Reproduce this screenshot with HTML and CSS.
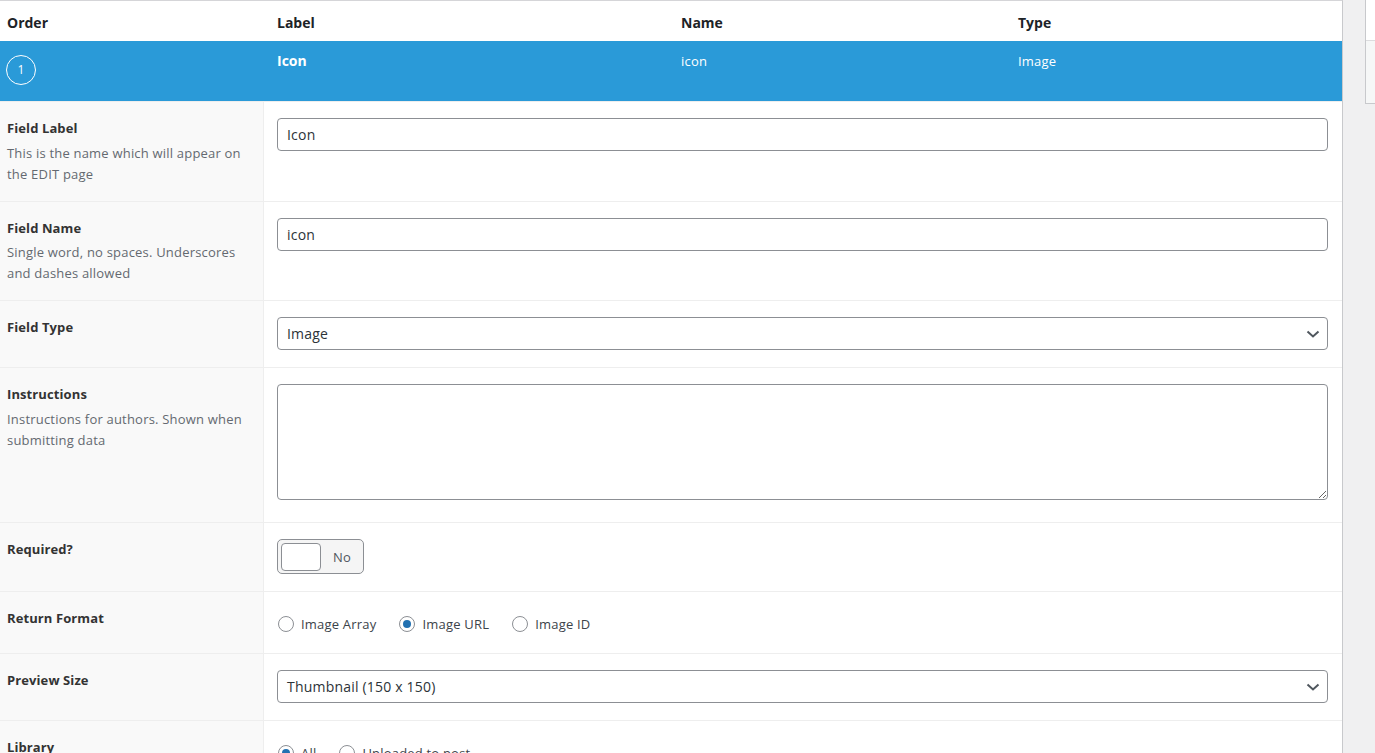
FILE: index.html
```html
<!DOCTYPE html>
<html lang="en">
<head>
    <meta charset="UTF-8">
    <title>Edit Field Group</title>
    <link rel="stylesheet" href="styles.css">
</head>
<body>
    <div class="page">
        <div class="panel">
            <!-- Column headings -->
            <div class="field-head">
                <div>Order</div>
                <div>Label</div>
                <div>Name</div>
                <div>Type</div>
            </div>

            <!-- Open field -->
            <div class="field-handle">
                <div><span class="circle">1</span></div>
                <div class="handle-label">Icon</div>
                <div>icon</div>
                <div>Image</div>
            </div>

            <div class="setting">
                <div class="setting-label">
                    <label>Field Label</label>
                    <p class="desc">This is the name which will appear on the EDIT page</p>
                </div>
                <div class="setting-input">
                    <input type="text" class="text-input" value="Icon">
                </div>
            </div>

            <div class="setting">
                <div class="setting-label">
                    <label>Field Name</label>
                    <p class="desc">Single word, no spaces. Underscores and dashes allowed</p>
                </div>
                <div class="setting-input">
                    <input type="text" class="text-input" value="icon">
                </div>
            </div>

            <div class="setting">
                <div class="setting-label">
                    <label>Field Type</label>
                </div>
                <div class="setting-input">
                    <div class="select">
                        <span>Image</span>
                        <svg width="16" height="16" viewBox="0 0 16 16"><path d="M2.5 5.5l5.5 5 5.5-5" fill="none" stroke="#50575e" stroke-width="2"/></svg>
                    </div>
                </div>
            </div>

            <div class="setting">
                <div class="setting-label">
                    <label>Instructions</label>
                    <p class="desc">Instructions for authors. Shown when submitting data</p>
                </div>
                <div class="setting-input">
                    <textarea class="text-area"></textarea>
                </div>
            </div>

            <div class="setting">
                <div class="setting-label">
                    <label>Required?</label>
                </div>
                <div class="setting-input">
                    <div class="switch">
                        <span class="knob"></span>
                        <span class="switch-text">No</span>
                    </div>
                </div>
            </div>

            <div class="setting">
                <div class="setting-label">
                    <label>Return Format</label>
                </div>
                <div class="setting-input">
                    <div class="radio-list">
                        <label><span class="radio"></span>Image Array</label>
                        <label><span class="radio checked"></span>Image URL</label>
                        <label><span class="radio"></span>Image ID</label>
                    </div>
                </div>
            </div>

            <div class="setting">
                <div class="setting-label">
                    <label>Preview Size</label>
                </div>
                <div class="setting-input">
                    <div class="select">
                        <span>Thumbnail (150 x 150)</span>
                        <svg width="16" height="16" viewBox="0 0 16 16"><path d="M2.5 5.5l5.5 5 5.5-5" fill="none" stroke="#50575e" stroke-width="2"/></svg>
                    </div>
                </div>
            </div>

            <div class="setting">
                <div class="setting-label">
                    <label>Library</label>
                </div>
                <div class="setting-input">
                    <div class="radio-list">
                        <label><span class="radio checked"></span>All</label>
                        <label><span class="radio"></span>Uploaded to post</label>
                    </div>
                </div>
            </div>
        </div>

        <!-- Sidebar box -->
        <div class="side">
            <div class="side-top"></div>
            <div class="side-bottom"></div>
        </div>
    </div>
</body>
</html>
```
FILE: styles.css
```css
body {
    margin: 0;
    background: #f0f0f1;
    font-family: "Open Sans", "Noto Sans", sans-serif;
    font-size: 13px;
    letter-spacing: 0.2px;
    color: #3c434a;
    overflow: hidden;
}

.page {
    display: flex;
    gap: 22px;
    height: 753px;
}

.panel {
    width: 1343px;
    flex: none;
    background: #fff;
    border-top: 1px solid #d5d5d8;
    border-right: 1px solid #c8c9cc;
    box-sizing: border-box;
}

/* Заголовки колонок */
.field-head, .field-handle {
    display: grid;
    grid-template-columns: 270px 404px 337px 1fr;
}

.field-head {
    height: 40px;
    padding-top: 2px;
    box-sizing: border-box;
    align-items: center;
    font-size: 14px;
    font-weight: bold;
    color: #1d2327;
    letter-spacing: 0;
}

.field-head div, .field-handle div {
    padding: 0 7px;
}

.field-handle {
    height: 60px;
    box-sizing: border-box;
    padding-top: 10px;
    background: #2a9ad8;
    color: #fff;
    line-height: 20px;
}

.handle-label {
    font-weight: bold;
    font-size: 14px;
    letter-spacing: 0;
}

.circle {
    display: block;
    width: 28px;
    height: 28px;
    margin: 4px 0 0 -1px;
    border: 1px solid #fff;
    border-radius: 50%;
    text-align: center;
    line-height: 28px;
    font-size: 12px;
}

/* Строки настроек */
.setting {
    display: grid;
    grid-template-columns: 264px 1fr;
    border-top: 1px solid #eee;
}

.setting-label {
    background: #f9f9f9;
    border-right: 1px solid #eee;
    padding: 16px 7px;
    box-sizing: border-box;
}

.setting-label label {
    display: block;
    font-weight: bold;
    line-height: 20.5px;
    color: #333;
    letter-spacing: 0.1px;
}

.desc {
    margin: 4px 0 0;
    line-height: 21px;
    color: #646970;
}

.setting-input {
    padding: 16px 14px 17px 13px;
}

.text-input, .select {
    display: flex;
    align-items: center;
    width: 100%;
    height: 33px;
    box-sizing: border-box;
    border: 1px solid #8c8f94;
    border-radius: 4px;
    padding: 0 9px;
    font-family: inherit;
    font-size: 14px;
    letter-spacing: 0.2px;
    color: #2c3338;
    background: #fff;
}

.select {
    justify-content: space-between;
    padding-right: 6px;
}

.text-area {
    display: block;
    width: 100%;
    height: 116px;
    box-sizing: border-box;
    margin-bottom: 5px;
    border: 1px solid #8c8f94;
    border-radius: 4px;
    font-family: inherit;
    font-size: 14px;
}

.switch {
    display: flex;
    align-items: center;
    width: 87px;
    height: 35px;
    box-sizing: border-box;
    padding: 3px;
    border: 1px solid #8c8f94;
    border-radius: 5px;
    background: #f5f5f5;
}

.knob {
    width: 40px;
    height: 28px;
    box-sizing: border-box;
    border: 1px solid #8c8f94;
    border-radius: 4px;
    background: #fff;
}

.switch-text {
    margin-left: 12px;
    color: #50575e;
}

.radio-list {
    display: flex;
    gap: 22px;
    height: 28px;
    padding-top: 3px;
    box-sizing: border-box;
    align-items: center;
}

.radio-list label {
    display: flex;
    align-items: center;
    gap: 7px;
    color: #3c434a;
}

.radio {
    width: 16px;
    height: 16px;
    box-sizing: border-box;
    margin-left: 1px;
    border: 1px solid #8c8f94;
    border-radius: 50%;
    background: #fff;
    display: flex;
    align-items: center;
    justify-content: center;
}

.radio.checked::before {
    content: "";
    width: 8px;
    height: 8px;
    border-radius: 50%;
    background: #2271b1;
}

/* Боковая панель */
.side {
    flex: 1;
    height: 104px;
    border-left: 1px solid #c8c9cc;
    border-bottom: 1px solid #c8c9cc;
    box-sizing: border-box;
}

.side-top {
    height: 40px;
    background: #fff;
    border-bottom: 1px solid #dcdcde;
}

.side-bottom {
    height: 62px;
    background: #f6f7f7;
}
```
